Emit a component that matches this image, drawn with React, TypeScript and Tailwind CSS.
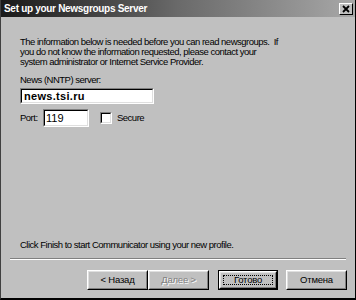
const FONT = { fontFamily: '"Liberation Sans", Arial, sans-serif' };

function Sunken({ className, children }: { className: string; children?: React.ReactNode }) {
  return (
    <div className={"border border-t-[#808080] border-l-[#808080] border-b-white border-r-white " + className}>
      <div className="h-full w-full border border-t-black border-l-black border-b-[#dfdfdf] border-r-[#dfdfdf] bg-white">
        {children}
      </div>
    </div>
  );
}

function Button({
  label,
  disabled,
  isDefault,
  className,
}: {
  label: string;
  disabled?: boolean;
  isDefault?: boolean;
  className: string;
}) {
  const face = (
    <div className="h-full w-full border border-t-white border-l-white border-b-black border-r-black">
      <div className="relative flex h-full w-full items-center justify-center border border-t-[#dfdfdf] border-l-[#dfdfdf] border-b-[#808080] border-r-[#808080]">
        {disabled ? (
          <span className="text-[#808080] [text-shadow:1px_1px_0_#ffffff]">{label}</span>
        ) : (
          <span>{label}</span>
        )}
        {isDefault && <span className="absolute inset-[2px] border border-dotted border-black" />}
      </div>
    </div>
  );
  if (isDefault) {
    return <div className={"border border-black " + className}>{face}</div>;
  }
  return <div className={className}>{face}</div>;
}

export default function App() {
  return (
    <div
      style={FONT}
      className="flex h-[300px] w-[356px] flex-col overflow-hidden border-l border-b-2 border-r border-l-[#404040] border-b-black border-r-black bg-[#c0c0c0] text-[9.5px] tracking-[-0.5px] text-black"
    >
      {/* title bar */}
      <div className="flex h-[17px] shrink-0 items-center justify-between bg-gradient-to-r from-[#1a1a1a] via-[#6a6a6a] to-[#a8a8a8] pl-[3px] pr-[2px]">
        <span className="whitespace-nowrap text-[10px] font-bold tracking-[-0.3px] text-white">Set up your Newsgroups Server</span>
        <div className="h-[12px] w-[14px] border border-t-white border-l-white border-b-black border-r-black bg-[#c0c0c0]">
          <svg viewBox="0 0 12 10" className="h-full w-full">
            <path d="M3 2 L9 8 M9 2 L3 8" stroke="black" strokeWidth="1.8" />
          </svg>
        </div>
      </div>

      <div className="flex shrink-0 flex-col px-[19px]">
        <p className="mt-[20px] whitespace-nowrap leading-[10px]">
          The information below is needed before you can read newsgroups.&nbsp; If
          <br />
          you do not know the information requested, please contact your
          <br />
          system administrator or Internet Service Provider.
        </p>

        <div className="mt-[8px] leading-[10px]">News (NNTP) server:</div>
        <Sunken className="mt-[3px] h-[16px] w-[134px]">
          <div className="pl-[2px] text-[11px] font-bold leading-[13px] tracking-[0.3px]">news.tsi.ru</div>
        </Sunken>

        <div className="mt-[5px] flex items-center">
          <span className="w-[23px]">Port:</span>
          <Sunken className="h-[18px] w-[46px]">
            <div className="pl-[1px] text-[11px] leading-[15px] tracking-normal">119</div>
          </Sunken>
          <Sunken className="ml-[11px] h-[12px] w-[12px]" />
          <span className="ml-[5px]">Secure</span>
        </div>

        <div className="mt-[113px] whitespace-nowrap leading-[10px]">
          Click Finish to start Communicator using your new profile.
        </div>
      </div>

      <div className="mx-[9px] mt-[8px] shrink-0 border-t border-b border-t-[#808080] border-b-white" />

      <div className="mt-[10px] flex shrink-0 pl-[86px] tracking-[-0.2px]">
        <Button label="< Назад" className="h-[20px] w-[61px]" />
        <Button label="Далее >" disabled className="h-[20px] w-[61px]" />
        <Button label="Готово" isDefault className="ml-[9px] h-[20px] w-[60px]" />
        <Button label="Отмена" className="ml-[8px] h-[20px] w-[61px]" />
      </div>
    </div>
  );
}
